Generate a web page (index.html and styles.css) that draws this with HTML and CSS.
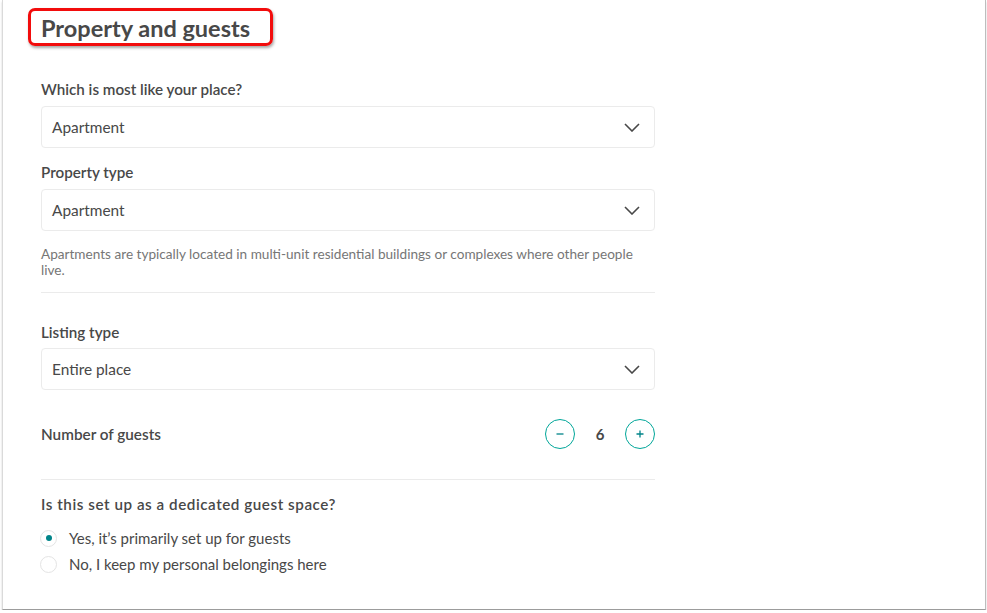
FILE: index.html
```html
<!DOCTYPE html>
<html>
<head>
<meta charset="utf-8">
<link rel="stylesheet" href="styles.css">
</head>
<body>
<div class="frame">
  <div class="content">
    <div class="title-box"><h1 class="title">Property and guests</h1></div>

    <div class="label first">Which is most like your place?</div>
    <div class="select">
      <span>Apartment</span>
      <svg class="chev" width="16" height="9" viewBox="0 0 16 9"><path d="M1 1l7 7 7-7" fill="none" stroke="#484848" stroke-width="1.6"/></svg>
    </div>

    <div class="label second">Property type</div>
    <div class="select">
      <span>Apartment</span>
      <svg class="chev" width="16" height="9" viewBox="0 0 16 9"><path d="M1 1l7 7 7-7" fill="none" stroke="#484848" stroke-width="1.6"/></svg>
    </div>
    <p class="help">Apartments are typically located in multi-unit residential buildings or complexes where other people live.</p>
    <div class="divider d1"></div>

    <div class="label third">Listing type</div>
    <div class="select">
      <span>Entire place</span>
      <svg class="chev" width="16" height="9" viewBox="0 0 16 9"><path d="M1 1l7 7 7-7" fill="none" stroke="#484848" stroke-width="1.6"/></svg>
    </div>

    <div class="guests">
      <span class="guests-label">Number of guests</span>
      <div class="stepper">
        <span class="step"><svg width="10" height="10" viewBox="0 0 10 10"><path d="M1.5 5h7" stroke="#008489" stroke-width="1.3"/></svg></span>
        <span class="count">6</span>
        <span class="step"><svg width="10" height="10" viewBox="0 0 10 10"><path d="M1.5 5h7M5 1.5v7" stroke="#008489" stroke-width="1.3"/></svg></span>
      </div>
    </div>
    <div class="divider d2"></div>

    <div class="label fourth">Is this set up as a dedicated guest space?</div>
    <div class="radios">
      <div class="radio-row"><span class="radio checked"></span><span>Yes, it’s primarily set up for guests</span></div>
      <div class="radio-row"><span class="radio"></span><span>No, I keep my personal belongings here</span></div>
    </div>
  </div>
</div>
</body>
</html>
```
FILE: styles.css
```css
* { box-sizing: border-box; }
html, body { margin: 0; padding: 0; background: #fff; }
body { font-family: Lato, "Liberation Sans", sans-serif; color: #484848; }

.frame {
  margin-left: 2px;
  width: 984px;
  height: 610px;
  border-left: 1px solid #dadada;
  border-right: 1px solid #bdbdbd;
  border-bottom: 1px solid #9c9c9c;
  box-shadow: 0 2px 2px rgba(0,0,0,0.18);
  background: #fff;
}

.content {
  width: 652px;
  padding-left: 38px;
  display: flex;
  flex-direction: column;
}

.title-box {
  align-self: flex-start;
  margin-left: -13px;
  margin-top: 8px;
  height: 38px;
  border: 3px solid #f20c0c;
  border-radius: 7px;
  padding: 0 20px 0 10px;
  box-shadow: 1px 2px 3px rgba(0,0,0,0.35);
  display: flex;
  align-items: center;
}
.title {
  margin: 2px 0 0;
  font-size: 23.5px;
  font-weight: 700;
  line-height: 28px;
  color: #484848;
}

.label {
  font-size: 15.2px;
  line-height: 20px;
  font-weight: 600;
  color: #484848;
  margin-bottom: 7px;
}
.label.first { margin-top: 33px; }
.label.second { margin-top: 14px; }
.label.third { margin-top: 29px; margin-bottom: 6px; }
.label.fourth { margin-top: 14px; margin-bottom: 11px; letter-spacing: 0.55px; }

.select {
  height: 42px;
  border: 1px solid #ebebeb;
  border-radius: 4px;
  display: flex;
  align-items: center;
  justify-content: space-between;
  padding: 0 14px 0 10px;
  font-size: 15.4px;
  color: #484848;
}
.chev { display: block; }

.help {
  margin: 15px 0 0;
  font-size: 13.6px;
  line-height: 16px;
  color: #767676;
  padding-right: 10px;
}

.divider { height: 1px; background: #ebebeb; }
.divider.d1 { margin-top: 14px; }
.divider.d2 { margin-top: 30px; }

.guests {
  margin-top: 29px;
  height: 30px;
  display: flex;
  align-items: center;
  justify-content: space-between;
}
.guests-label { font-size: 15.3px; font-weight: 600; }
.stepper { display: flex; align-items: center; }
.step {
  width: 30px;
  height: 30px;
  border: 1px solid #00a699;
  border-radius: 50%;
  display: flex;
  align-items: center;
  justify-content: center;
}
.step svg { display: block; }
.count {
  width: 50px;
  text-align: center;
  font-size: 15px;
  font-weight: 700;
}

.radios { display: flex; flex-direction: column; }
.radio-row {
  height: 26px;
  display: flex;
  align-items: center;
  gap: 12px;
  font-size: 15px;
  color: #484848;
}
.radio {
  width: 17px;
  height: 17px;
  border: 1px solid #e4e4e4;
  border-radius: 50%;
  margin-left: -1px;
  display: flex;
  align-items: center;
  justify-content: center;
}
.radio.checked::after {
  content: "";
  width: 6px;
  height: 6px;
  border-radius: 50%;
  background: #008489;
}
```
